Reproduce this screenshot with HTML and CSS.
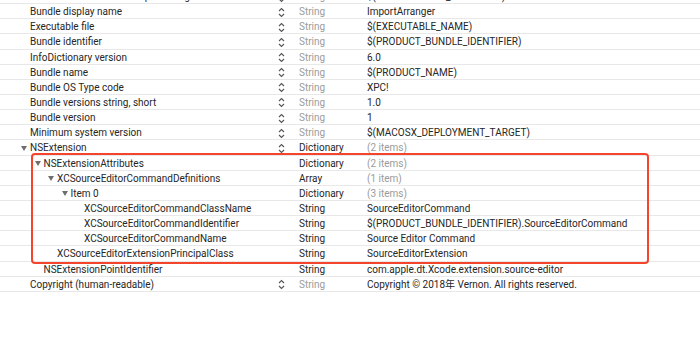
FILE: index.html
```html
<!DOCTYPE html>
<html lang="en">
<head>
    <meta charset="UTF-8">
    <title>Info.plist</title>
    <link rel="stylesheet" href="styles.css">
</head>
<body>
    <div class="plist">
        <div class="row">
            <div class="key lv0"><span class="toggle"></span>Localization native development region</div>
            <div class="stepper"><svg width="7" height="11" viewBox="0 0 7 11"><path d="M1 4 L3.5 1.5 L6 4 M1 7 L3.5 9.5 L6 7"/></svg></div>
            <div class="type dim">String</div>
            <div class="value">$(DEVELOPMENT_LANGUAGE)</div>
        </div>
        <div class="row">
            <div class="key lv0"><span class="toggle"></span>Bundle display name</div>
            <div class="stepper"><svg width="7" height="11" viewBox="0 0 7 11"><path d="M1 4 L3.5 1.5 L6 4 M1 7 L3.5 9.5 L6 7"/></svg></div>
            <div class="type dim">String</div>
            <div class="value">ImportArranger</div>
        </div>
        <div class="row">
            <div class="key lv0"><span class="toggle"></span>Executable file</div>
            <div class="stepper"><svg width="7" height="11" viewBox="0 0 7 11"><path d="M1 4 L3.5 1.5 L6 4 M1 7 L3.5 9.5 L6 7"/></svg></div>
            <div class="type dim">String</div>
            <div class="value">$(EXECUTABLE_NAME)</div>
        </div>
        <div class="row">
            <div class="key lv0"><span class="toggle"></span>Bundle identifier</div>
            <div class="stepper"><svg width="7" height="11" viewBox="0 0 7 11"><path d="M1 4 L3.5 1.5 L6 4 M1 7 L3.5 9.5 L6 7"/></svg></div>
            <div class="type dim">String</div>
            <div class="value">$(PRODUCT_BUNDLE_IDENTIFIER)</div>
        </div>
        <div class="row">
            <div class="key lv0"><span class="toggle"></span>InfoDictionary version</div>
            <div class="stepper"><svg width="7" height="11" viewBox="0 0 7 11"><path d="M1 4 L3.5 1.5 L6 4 M1 7 L3.5 9.5 L6 7"/></svg></div>
            <div class="type dim">String</div>
            <div class="value">6.0</div>
        </div>
        <div class="row">
            <div class="key lv0"><span class="toggle"></span>Bundle name</div>
            <div class="stepper"><svg width="7" height="11" viewBox="0 0 7 11"><path d="M1 4 L3.5 1.5 L6 4 M1 7 L3.5 9.5 L6 7"/></svg></div>
            <div class="type dim">String</div>
            <div class="value">$(PRODUCT_NAME)</div>
        </div>
        <div class="row">
            <div class="key lv0"><span class="toggle"></span>Bundle OS Type code</div>
            <div class="stepper"><svg width="7" height="11" viewBox="0 0 7 11"><path d="M1 4 L3.5 1.5 L6 4 M1 7 L3.5 9.5 L6 7"/></svg></div>
            <div class="type dim">String</div>
            <div class="value">XPC!</div>
        </div>
        <div class="row">
            <div class="key lv0"><span class="toggle"></span>Bundle versions string, short</div>
            <div class="stepper"><svg width="7" height="11" viewBox="0 0 7 11"><path d="M1 4 L3.5 1.5 L6 4 M1 7 L3.5 9.5 L6 7"/></svg></div>
            <div class="type dim">String</div>
            <div class="value">1.0</div>
        </div>
        <div class="row">
            <div class="key lv0"><span class="toggle"></span>Bundle version</div>
            <div class="stepper"><svg width="7" height="11" viewBox="0 0 7 11"><path d="M1 4 L3.5 1.5 L6 4 M1 7 L3.5 9.5 L6 7"/></svg></div>
            <div class="type dim">String</div>
            <div class="value">1</div>
        </div>
        <div class="row">
            <div class="key lv0"><span class="toggle"></span>Minimum system version</div>
            <div class="stepper"><svg width="7" height="11" viewBox="0 0 7 11"><path d="M1 4 L3.5 1.5 L6 4 M1 7 L3.5 9.5 L6 7"/></svg></div>
            <div class="type dim">String</div>
            <div class="value">$(MACOSX_DEPLOYMENT_TARGET)</div>
        </div>
        <div class="row">
            <div class="key lv0"><span class="toggle open"></span>NSExtension</div>
            <div class="stepper"><svg width="7" height="11" viewBox="0 0 7 11"><path d="M1 4 L3.5 1.5 L6 4 M1 7 L3.5 9.5 L6 7"/></svg></div>
            <div class="type">Dictionary</div>
            <div class="value dim">(2 items)</div>
        </div>
        <div class="row">
            <div class="key lv1"><span class="toggle open"></span>NSExtensionAttributes</div>
            <div class="stepper"></div>
            <div class="type">Dictionary</div>
            <div class="value dim">(2 items)</div>
        </div>
        <div class="row">
            <div class="key lv2"><span class="toggle open"></span>XCSourceEditorCommandDefinitions</div>
            <div class="stepper"></div>
            <div class="type">Array</div>
            <div class="value dim">(1 item)</div>
        </div>
        <div class="row">
            <div class="key lv3"><span class="toggle open"></span>Item 0</div>
            <div class="stepper"></div>
            <div class="type">Dictionary</div>
            <div class="value dim">(3 items)</div>
        </div>
        <div class="row">
            <div class="key lv4"><span class="toggle"></span>XCSourceEditorCommandClassName</div>
            <div class="stepper"></div>
            <div class="type">String</div>
            <div class="value">SourceEditorCommand</div>
        </div>
        <div class="row">
            <div class="key lv4"><span class="toggle"></span>XCSourceEditorCommandIdentifier</div>
            <div class="stepper"></div>
            <div class="type">String</div>
            <div class="value">$(PRODUCT_BUNDLE_IDENTIFIER).SourceEditorCommand</div>
        </div>
        <div class="row">
            <div class="key lv4"><span class="toggle"></span>XCSourceEditorCommandName</div>
            <div class="stepper"></div>
            <div class="type">String</div>
            <div class="value">Source Editor Command</div>
        </div>
        <div class="row">
            <div class="key lv2"><span class="toggle"></span>XCSourceEditorExtensionPrincipalClass</div>
            <div class="stepper"></div>
            <div class="type">String</div>
            <div class="value">SourceEditorExtension</div>
        </div>
        <div class="row">
            <div class="key lv1"><span class="toggle"></span>NSExtensionPointIdentifier</div>
            <div class="stepper"></div>
            <div class="type">String</div>
            <div class="value">com.apple.dt.Xcode.extension.source-editor</div>
        </div>
        <div class="row">
            <div class="key lv0"><span class="toggle"></span>Copyright (human-readable)</div>
            <div class="stepper"><svg width="7" height="11" viewBox="0 0 7 11"><path d="M1 4 L3.5 1.5 L6 4 M1 7 L3.5 9.5 L6 7"/></svg></div>
            <div class="type dim">String</div>
            <div class="value">Copyright © 2018年 Vernon. All rights reserved.</div>
        </div>

        <div class="highlight"></div>
    </div>
</body>
</html>
```

FILE: styles.css
```css
body {
    margin: 0;
    background-color: white;
    font-family: Roboto, "Noto Sans CJK SC", sans-serif;
    font-size: 10px;
    color: #262626;
    overflow: hidden;
}
.plist {
    position: relative;
    margin-top: -11px;
}
.row {
    display: grid;
    grid-template-columns: 278px 21px 68px 1fr;
    height: 15.15px;
    box-sizing: border-box;
    border-bottom: 1px solid #e8e8e8;
    line-height: 16px;
    white-space: nowrap;
}
.key {
    display: flex;
    align-items: center;
}
.lv0 { padding-left: 21px; }
.lv1 { padding-left: 34.5px; }
.lv2 { padding-left: 48px; }
.lv3 { padding-left: 61.5px; }
.lv4 { padding-left: 75px; }
.toggle {
    width: 9px;
    flex-shrink: 0;
    height: 5px;
}
.toggle.open::before {
    content: "";
    display: block;
    width: 0;
    height: 0;
    border-left: 3px solid transparent;
    border-right: 3px solid transparent;
    border-top: 5px solid #6e6e6e;
}
.stepper {
    display: flex;
    align-items: center;
}
.stepper svg {
    fill: none;
    stroke: #555;
    stroke-width: 1.1;
}
.dim {
    color: #9b9b9b;
}
.highlight {
    position: absolute;
    left: 31px;
    top: 164px;
    width: 618px;
    height: 111px;
    box-sizing: border-box;
    border: 2px solid #f4452c;
    border-radius: 4px;
}
```
